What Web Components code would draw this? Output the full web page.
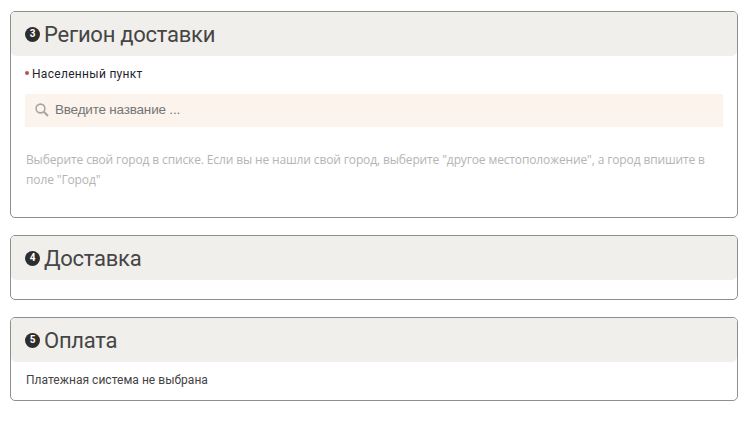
<!DOCTYPE html>
<html lang="ru">
<head>
<meta charset="utf-8">
<title>Оформление заказа</title>
<style>
	html, body { margin: 0; background: #fff; }
	body { font-family: "Open Sans", "Liberation Sans", sans-serif; }
	main { display: flex; flex-direction: column; gap: 17px; padding: 11px 14px 0 10px; }
</style>
</head>
<body>
<main>
	<checkout-section num="3" heading="Регион доставки" style="height:207px">
		<city-field></city-field>
	</checkout-section>
	<checkout-section num="4" heading="Доставка" style="height:65px"></checkout-section>
	<checkout-section num="5" heading="Оплата" style="height:84px">
		<p style="margin:11px 0 0 15px;font:12px/14px Roboto,sans-serif;color:#444;letter-spacing:.03px">Платежная система не выбрана</p>
	</checkout-section>
</main>

<script>
class CheckoutSection extends HTMLElement {
	constructor() {
		super();
		this.attachShadow({mode:'open'});
	}

	connectedCallback() {
		this.shadowRoot.innerHTML = `
		<style>
			:host {
				display: block;
				box-sizing: border-box;
				border: 1px solid #8e8e8e;
				border-radius: 5px;
				background: #fff;
			}
			header {
				display: flex;
				align-items: center;
				gap: 4px;
				height: 44px;
				padding: 0 0 0 14px;
				background: #f0efeb;
				border-radius: 4px 4px 5px 5px;
				box-sizing: border-box;
			}
			.num {
				display: flex;
				align-items: center;
				justify-content: center;
				width: 15px;
				height: 15px;
				border-radius: 50%;
				background: #2d2d2d;
				color: #fff;
				font: 700 10px/1 Roboto, sans-serif;
			}
			h2 {
				margin: 1px 0 0 0;
				font: 400 22px/1 Roboto, sans-serif;
				letter-spacing: -.25px;
				color: #454545;
			}
		</style>
		<header>
			<span class="num">${this.getAttribute('num')}</span>
			<h2>${this.getAttribute('heading')}</h2>
		</header>
		<slot></slot>`;
	}
}

class CityField extends HTMLElement {
	constructor() {
		super();
		this.attachShadow({mode:'open'});
	}

	connectedCallback() {
		this.shadowRoot.innerHTML = `
		<style>
			:host {
				display: block;
				padding: 11px 14px 0 14px;
			}
			label {
				display: flex;
				align-items: center;
				gap: 3px;
				font: 12px/14px Roboto, sans-serif;
				letter-spacing: .3px;
				color: #1f1f2e;
			}
			label i {
				width: 4px;
				height: 4px;
				margin: 0 0 3px 0;
				border-radius: 50%;
				background: #b5544a;
			}
			.search {
				display: flex;
				align-items: center;
				gap: 6px;
				height: 33px;
				margin-top: 13px;
				padding: 0 0 2px 10px;
				background: #fcf3ed;
				box-sizing: border-box;
			}
			svg { flex: none; }
			.search span {
				font: 13.5px "Liberation Sans", Arial, sans-serif;
				letter-spacing: -.2px;
				color: #757575;
			}
			p {
				margin: 23px 0 0 1px;
				font: 12px/20px "Open Sans", sans-serif;
				letter-spacing: -.13px;
				color: #b4b4b4;
			}
		</style>
		<label><i></i>Населенный пункт</label>
		<div class="search">
			<svg width="14" height="14" viewBox="0 0 14 14" fill="none" stroke="#aaa49f" stroke-width="1.6">
				<circle cx="5.5" cy="5.5" r="4.4"/>
				<path d="M8.8 8.8 13 13" stroke-width="2"/>
			</svg>
			<span>Введите название ...</span>
		</div>
		<p>Выберите свой город в списке. Если вы не нашли свой город, выберите "другое местоположение", а город впишите в поле "Город"</p>`;
	}
}

window.customElements.define('checkout-section', CheckoutSection);
window.customElements.define('city-field', CityField);
</script>
</body>
</html>
